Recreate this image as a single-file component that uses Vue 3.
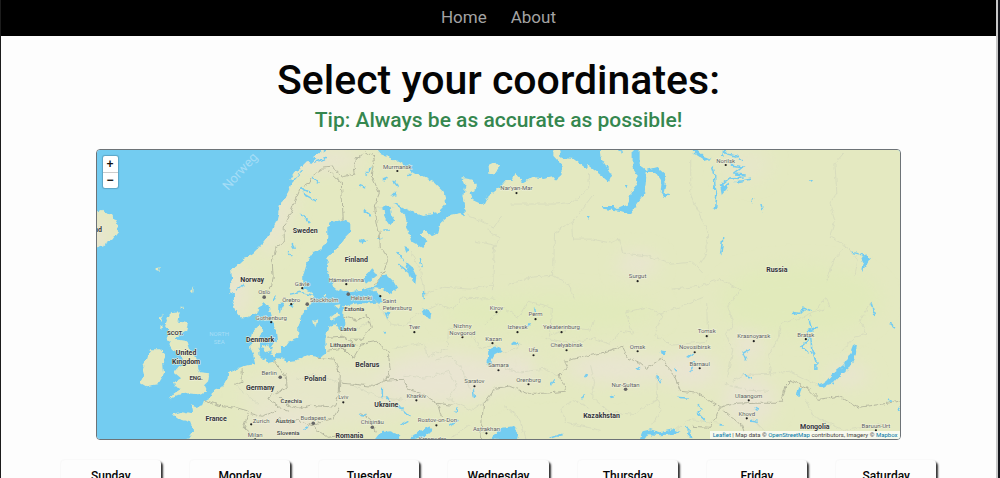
<script setup>
const links = ['Home', 'About']
const days = ['Sunday', 'Monday', 'Tuesday', 'Wednesday', 'Thursday', 'Friday', 'Saturday']

const mainland =
  'M185 442L193 430 190 422 177 418 173 414 183 411 192 413 191 405 196 407 203 405 205 400 212 396 213 390 222 387 227 380 228 373 237 369 242 367 248 365 255 364 253 355 250 348 250 340 252 332 260 324 263 330 259 337 260 345 258 353 263 358 267 362 275 360 282 357 287 362 295 361 307 355 320 357 326 353 325 340 328 327 335 324 340 331 345 329 345 320 342 313 343 306 357 303 370 303 382 302 380 295 373 289 357 290 345 292 333 287 328 272 327 258 337 248 345 237 350 232 350 223 343 220 330 222 327 228 327 238 323 248 313 253 307 262 303 275 303 288 313 293 313 297 310 305 302 313 298 327 298 337 290 340 285 347 278 346 277 333 273 323 270 313 268 305 263 303 257 312 248 317 240 317 235 310 232 300 235 294 230 292 232 278 231 270 242 260 253 253 263 243 272 232 277 218 280 205 288 192 291 184 300 174 310 164 320 155 330 146H373L380 154 390 158 400 163 413 172 433 182 443 192 446 203 437 213 423 216 407 210 393 202 405 215 407 228 412 242 423 248 427 240 420 235 423 230 432 236 438 233 440 223 450 215 460 213 463 217 465 208 463 195 465 185 462 178 473 180 477 188 470 192 472 200 483 205 487 197 500 187 506 180 512 180 515 173 520 178 522 183 533 177 543 179 552 177 555 181 562 175 562 165 553 155 550 146H558L560 158 573 159 585 168 587 165 600 175 608 182 611 175 605 165 600 158 599 146H906V445H185Z'

const islands = [
  'M170 313L180 312 176 321 188 323 186 330 179 335 175 339 187 341 190 350 196 357 198 367 200 373 209 374 208 381 204 385 207 391 198 394 187 393 177 395 169 399 174 393 182 388 175 386 174 382 181 378 174 372 178 367 183 365 182 355 175 353 170 345 166 338 168 330 165 326Z',
  'M150 349L160 349 166 355 163 361 164 374 158 384 146 386 139 382 144 375 142 367 147 359Z',
  'M94 212L102 210 106 213 112 215 117 224 118 232 112 240 103 246 94 249Z',
  'M488 165L494 162 499 167 495 173 489 174Z',
  'M261 346L268 344 271 350 266 352ZM272 344L280 341 281 350 275 356 270 354Z',
  'M155 269L160 268 158 271ZM191 291L194 286 193 293ZM181 308L183 306 184 309Z',
  'M160 317L164 315 160 322ZM159 326L163 325 162 329Z',
  'M329 318L337 312 340 315 333 320ZM334 305L340 304 339 309Z',
  'M289 180L294 172 302 168 297 177ZM300 168L307 161 311 165 304 172ZM313 157L323 150 327 154 317 161Z',
  'M322 295L327 294 325 297ZM313 321L317 319 315 327Z',
]

const waters = [
  'M632 146H639L639 165 645 170 656 167 664 174 665 184 663 193 669 194 664 198 660 192 661 181 655 172 646 172 645 184 644 193 636 204 630 214 620 211 604 209 602 206 613 206 617 209 626 205 630 194 636 184 637 176 632 168Z',
  'M690 147L697 150 703 156 711 159 704 161 695 155Z',
  'M379 277L386 274 393 281 397 288 389 294 383 289 375 288Z',
  'M405 261L411 266 416 276 415 284 409 277Z',
  'M383 206L389 207 391 215 395 222 390 225 384 216Z',
  'M852 346L856 344 855 354 849 367 838 376 832 383 820 387 818 384 826 381 833 373 843 365 849 354Z',
  'M373 441L380 432 389 431 400 435 397 441Z',
  'M407 440L418 431 430 426 432 430 423 437Z',
  'M490 439L499 428 512 426 518 433 516 441Z',
  'M639 440L642 431 650 429 659 432 672 429 680 432 672 434 660 435 648 434 643 441Z',
  'M688 430L692 438 687 437Z',
  'M798 386L801 387 799 395 796 396Z',
  'M719 184L723 187 729 183 726 189 721 195Z',
  'M422 308L431 312 430 319 424 316Z',
  'M384 312L389 313 387 319ZM382 330L385 331 384 334Z',
  'M488 349L497 347 502 350 494 354 490 361 492 368 487 364Z',
  'M512 341L520 343 512 345Z',
  'M660 351L666 352 662 356ZM609 396L614 395 611 399Z',
  'M860 257L866 254 870 258 866 264 861 271 863 263Z',
  'M278 304L284 303 283 308 278 312ZM288 306L295 301 292 309Z',
  'M365 173L372 166 370 170 365 175Z',
  'M382 178L387 176 385 181ZM390 197L397 190 396 195Z',
  'M359 239L367 240 361 243ZM407 212L412 216 409 218Z',
  'M624 186L628 186 626 189ZM586 216L589 216 588 220Z',
  'M808 180L812 180 811 183Z',
  'M404 247L409 249 406 253ZM398 254L402 255 400 257Z',
  'M363 279L372 268 377 275 366 284Z',
]

const streams = [
  'M290 294L300 292 312 295 322 293 333 296M348 292L360 291 371 288 380 286',
  'M711 165L714 174 714 184 716 194 715 208 713 209',
  'M722 157L723 150 727 154 735 156 741 161M730 165L742 167 733 174 745 175M735 182L751 179',
  'M720 185L729 178 742 177M753 198L751 202M760 203L762 211M722 238L720 254',
  'M791 313L797 314 803 308 812 311M808 319L811 330 805 331 816 327',
  'M804 335L810 338 811 350 815 360 815 370M808 339L801 346 808 353',
  'M749 349L742 353 745 360M744 374L751 378M697 405L702 409 697 413 704 420',
  'M870 303L874 316M851 252L859 254 867 258M889 323L894 327',
  'M302 193L316 201M300 213L310 223M292 243L294 249M288 252L292 257',
  'M312 176L318 183M358 185L365 188M363 209L371 216M393 181L397 186M407 177L411 173',
  'M382 230L389 230M377 239L383 238M397 251L403 260M398 264L408 272M420 258L422 268M423 291L424 299',
  'M327 158L315 162M300 188L310 193M275 296L273 301M236 290L244 285',
  'M386 397L393 406 400 407 410 417M400 425L407 421M382 388L382 398M303 429L308 426M359 414L365 415',
  'M473 389L474 398M448 425L458 420M455 412L457 408M525 328L530 323M534 308L535 312',
  'M584 377L586 374M581 399L584 394M657 376L660 382M684 426L690 431M550 385L554 379M550 438L562 434M636 367L639 370',
  'M686 358L693 353M694 361L690 372M674 368L676 371M896 411L900 407M886 400L892 401',
  'M754 408L758 410M750 420L757 421M719 424L722 425M618 150L623 153M677 397L688 398',
]

const borders = [
  'M263 293L271 287 273 277 272 262 276 247 284 242 284 227 289 216 294 202 300 188 308 184 315 173 323 168 332 167 342 177 355 174 353 162 365 152 374 157',
  'M328 170L341 183 342 200 343 221M371 152L374 160 371 175 379 193 374 206 376 218 379 235 380 247 388 258 384 270 374 285',
  'M274 360L285 376 286 388 275 393 286 404 297 408 310 405 335 407 339 391 340 375 334 359 317 357M327 350L343 348 353 358 361 344 377 341 388 353 390 370 386 380 372 386 354 384 342 383',
  'M343 316L357 320 367 315 371 327 362 339 350 339M328 337L342 336 356 345M382 380L403 379 408 389 423 394 437 403 441 417M339 407L333 418 311 425 298 420 286 423 278 418M311 425L327 437 341 435M360 412L370 419 375 432M278 390L267 398 281 408 289 411M277 410L261 416 250 413M205 400L219 405 235 407 249 411 243 427 251 434M234 384L242 381 242 369',
  'M437 403L452 405M480 440L483 404 495 388 509 386 527 393 544 393 565 391 563 381 557 376 567 367 564 361 603 352 622 346 627 358 639 362 646 368 661 358 673 374 680 391 697 393 719 407 736 403 755 402 781 402 785 386 791 380 808 389 818 399 838 396 858 407 880 404 903 400M719 408L710 427 691 426M722 410L741 425 744 433',
]

const regions = [
  'M376 208L394 207M410 252L420 270 425 294 442 287 470 289 491 285M466 215L482 221 493 228 500 217M474 241L494 245 492 289M488 230L499 238 492 252M510 204L555 204 573 202 588 188 589 174M553 275L554 233 571 222 583 207 593 194M572 222L573 239 592 239 610 243 619 239 623 253 648 256 670 264 692 262 701 272M508 284L532 277 552 275 568 284 574 299M671 289L700 286 719 279 741 290',
  'M690 160L690 196 701 219 707 231 706 252 700 263M843 153L834 163 836 193 829 203 834 220 829 237 846 246 833 260 826 281M846 246L857 260 854 276M740 289L727 306 733 325 725 334 732 349 727 377M770 377L768 354 778 338 781 323 802 317 825 308M870 302L859 321 866 334 854 337 840 352M760 374L789 371 809 381 820 386M731 380L745 374 768 374M815 310L824 297 830 308M724 384L748 390 768 391',
  'M374 299L390 324 405 326 413 316 438 304 453 309 460 298 495 299M392 348L423 343 427 357 447 348 448 328 469 330 479 348 493 344 506 353 521 344M435 360L450 356 461 368 469 388M404 375L425 378 449 371 456 386 448 399 471 410 490 398M484 325L503 307 518 318 528 301 551 307 549 336 570 327 590 330 593 319M545 338L570 343 593 338 609 344 620 331 632 333 625 312 646 307 662 315 654 334 671 345 707 341 706 303M590 365L594 382 591 396 607 411 631 414 657 399 656 374M657 315L703 297M500 366L517 372 544 369 559 377',
  'M600 430L566 422 560 408 576 400 588 408M652 424L661 409 656 398M674 431L688 419 719 423M526 439L518 417 503 405M452 437L468 425 486 433M354 386L379 397 404 400M353 330L373 320M296 379L314 374 338 382M236 386L250 397 259 405M750 416L764 431 793 437M805 399L812 416 844 430 881 424',
]

const cities = [
  ['Murmansk', 397, 169, 397, 171], ["Nar'yan-Mar", 516, 190, 516, 193], ['Norilsk', 725, 163, 725, 165],
  ['Surgut', 637, 278, 637, 281], ['Gävle', 302, 286, 302, 288], ['Hämeenlinna', 346, 282, 346, 284],
  ['Örebro', 291, 302, 291, 304], ['Gothenburg', 271, 320, 271, 322], ['Tver', 414, 329, 414, 332],
  ['Kirov', 496, 310, 496, 312], ['Perm', 535, 316, 535, 319], ['Izhevsk', 517, 329, 517, 332],
  ['Yekaterinburg', 561, 329, 561, 332], ['Kazan', 493, 341, 492, 343], ['Ufa', 533, 352, 533, 355],
  ['Chelyabinsk', 566, 347, 566, 350], ['Samara', 498, 367, 498, 370], ['Orenburg', 528, 382, 528, 384],
  ['Omsk', 637, 349, 637, 351], ['Novosibirsk', 694, 349, 694, 352], ['Tomsk', 706, 333, 706, 336],
  ['Barnaul', 699, 366, 699, 368], ['Krasnoyarsk', 753, 338, 753, 341], ['Bratsk', 805, 337, 805, 339],
  ['Saratov', 474, 383, 474, 386], ['Kharkiv', 416, 398, 416, 400], ['Lviv', 343, 399, 343, 402],
  ['Rostov-on-Don', 437, 422, 436, 425], ['Astrakhan', 486, 431, 486, 433], ['Zurich', 261, 423, 251, 424],
  ['Milan', 255, 437, 255, 439], ['Ulaangom', 748, 398, 748, 400], ['Khovd', 746, 416, 746, 418],
  ['Baruun-Urt', 875, 428, 875, 430],
]
const capitals = [
  ['Oslo', 264, 294, 264, 297], ['Berlin', 269, 375, 280, 377], ['Budapest', 313, 420, 313, 423],
  ['Chişinău', 372, 424, 372, 427], ['Nur-Sultan', 625, 387, 625, 389], ['Stockholm', 324, 302, 307, 304],
  ['Helsinki', 361, 300, 348, 294],
]
const countries = [
  ['Sweden', 305, 233], ['Norway', 252, 282], ['Finland', 356, 262], ['Denmark', 260, 342],
  ['Germany', 260, 390], ['Poland', 315, 381], ['Belarus', 367, 367], ['Ukraine', 386, 407],
  ['France', 216, 421], ['Romania', 349, 438], ['Russia', 776, 272], ['Kazakhstan', 601, 418],
  ['Mongolia', 814, 429], ['United', 186, 355], ['Kingdom', 186, 364],
]
const smallCountries = [
  ['Estonia', 354, 311], ['Latvia', 348, 331], ['Lithuania', 342, 347], ['Czechia', 291, 403],
  ['Austria', 285, 423], ['Slovenia', 288, 435],
]
</script>

<template>
  <div class="page">
    <header class="topbar">
      <nav class="nav" aria-label="Main">
        <a v-for="link in links" :key="link" href="#">{{ link }}</a>
      </nav>
    </header>

    <main>
      <h1>Select your coordinates:</h1>
      <p class="tip">Tip: Always be as accurate as possible!</p>

      <section class="map" aria-label="Map">
        <svg class="tiles" viewBox="97 150 803 289" preserveAspectRatio="xMidYMid slice">
          <defs>
            <filter id="coast" x="0" y="0" width="1" height="1">
              <feTurbulence type="fractalNoise" baseFrequency="0.2" numOctaves="2" seed="4" result="n" />
              <feDisplacementMap in="SourceGraphic" in2="n" scale="5" xChannelSelector="R" yChannelSelector="G" />
            </filter>
            <filter id="soft" x="-0.5" y="-0.5" width="2" height="2"><feGaussianBlur stdDeviation="9" /></filter>
            <clipPath id="ground">
              <path :d="mainland" />
              <path v-for="d in islands" :key="d" :d="d" />
            </clipPath>
          </defs>
          <rect x="90" y="140" width="820" height="310" fill="#73ccf1" />
          <g filter="url(#coast)">
            <rect x="90" y="140" width="820" height="310" fill="none" />
            <g clip-path="url(#ground)">
              <rect x="90" y="140" width="820" height="310" fill="#e4e9c1" />
              <g filter="url(#soft)" fill="#e9e5d1">
                <ellipse cx="236" cy="292" rx="12" ry="24" />
                <ellipse cx="278" cy="222" rx="9" ry="35" transform="rotate(22 278 222)" />
                <ellipse cx="325" cy="160" rx="38" ry="10" />
                <ellipse cx="96" cy="237" rx="12" ry="20" />
                <ellipse cx="440" cy="378" rx="60" ry="26" />
                <ellipse cx="515" cy="370" rx="35" ry="16" />
                <ellipse cx="620" cy="368" rx="55" ry="14" />
                <ellipse cx="690" cy="370" rx="28" ry="18" />
                <ellipse cx="637" cy="264" rx="20" ry="11" />
                <ellipse cx="748" cy="400" rx="26" ry="26" />
                <ellipse cx="748" cy="345" rx="14" ry="18" />
                <ellipse cx="848" cy="375" rx="20" ry="10" />
                <ellipse cx="285" cy="425" rx="36" ry="14" />
                <ellipse cx="330" cy="395" rx="90" ry="30" opacity=".5" />
                <ellipse cx="745" cy="165" rx="25" ry="16" opacity=".5" />
              </g>
              <g filter="url(#soft)" fill="#e1eabb">
                <ellipse cx="550" cy="312" rx="110" ry="18" />
                <ellipse cx="800" cy="300" rx="80" ry="35" />
                <ellipse cx="542" cy="365" rx="6" ry="20" />
              </g>
            </g>
            <g fill="none" stroke="#cfd2ba" stroke-width="0.7" opacity="0.8">
              <path v-for="d in regions" :key="d" :d="d" />
            </g>
            <g fill="none" stroke="#b0b29b" stroke-width="0.9">
              <path v-for="d in borders" :key="d" :d="d" />
            </g>
            <g fill="#73ccf1">
              <path v-for="d in waters" :key="d" :d="d" />
            </g>
            <g fill="none" stroke="#73ccf1" stroke-width="1.5">
              <path v-for="d in streams" :key="d" :d="d" />
            </g>
          </g>

          <g class="sea">
            <text class="sea-big" transform="translate(228 191) rotate(-48)">Norweg</text>
            <text x="219" y="336">NORTH</text>
            <text x="219" y="344">SEA</text>
          </g>
          <g class="label city">
            <template v-for="c in cities" :key="c[0]">
              <circle :cx="c[3]" :cy="c[4]" r="1.1" />
              <text :x="c[1]" :y="c[2]">{{ c[0] }}</text>
            </template>
            <circle cx="380" cy="296" r="1.1" />
            <text x="389" y="303">Saint</text>
            <text x="397" y="310">Petersburg</text>
            <circle cx="462" cy="337" r="1.1" />
            <text x="462" y="328">Nizhny</text>
            <text x="462" y="335">Novgorod</text>
            <text x="432" y="441">Krasnodar</text>
          </g>
          <g class="label city capital">
            <template v-for="c in capitals" :key="c[0]">
              <circle :cx="c[3]" :cy="c[4]" r="1.8" />
              <text :x="c[1]" :y="c[2]">{{ c[0] }}</text>
            </template>
          </g>
          <g class="label small">
            <text v-for="c in smallCountries" :key="c[0]" :x="c[1]" :y="c[2]">{{ c[0] }}</text>
            <text class="nation" x="175" y="335">SCOT.</text>
            <text class="nation" x="196" y="380">ENG.</text>
          </g>
          <g class="label country">
            <text v-for="c in countries" :key="c[0]" :x="c[1]" :y="c[2]">{{ c[0] }}</text>
            <text x="98" y="232">nd</text>
          </g>
        </svg>
        <div class="zoom">
          <button type="button" aria-label="Zoom in">+</button>
          <button type="button" aria-label="Zoom out">−</button>
        </div>
        <div class="credit">
          <a href="#">Leaflet</a> | Map data © <a href="#">OpenStreetMap</a> contributors, Imagery © <a href="#">Mapbox</a>
        </div>
      </section>

      <section class="days" aria-label="Forecast">
        <article v-for="day in days" :key="day" class="day">
          <h2>{{ day }}</h2>
        </article>
      </section>
    </main>
  </div>
</template>

<style>
html,
body {
  background: #fdfdfd;
}
</style>

<style scoped>
.page {
  box-sizing: border-box;
  height: 100vh;
  padding-right: 2px;
  overflow: hidden;
  border-left: 1px solid #1c1c1c;
  border-right: 2px solid #15161c;
  background: #fdfdfd;
  box-shadow: inset -2px 0 #c8c8c8;
  font-family: Roboto, "Liberation Sans", sans-serif;
  color: #050505;
}
.topbar {
  background: #000;
}
.nav {
  display: flex;
  justify-content: center;
  gap: 24px;
  padding: 5px 0 7px;
}
.nav a {
  color: #a3a3a3;
  font-size: 17px;
  line-height: 24px;
  text-decoration: none;
}
main {
  display: flex;
  flex-direction: column;
  align-items: center;
}
h1 {
  margin: 18px 0 0;
  font-size: 41px;
  font-weight: 500;
  line-height: 52px;
}
.tip {
  margin: 0;
  padding: 1px 0 16px;
  color: #35874f;
  font-size: 21px;
  font-weight: 500;
  line-height: 26px;
}
.map {
  position: relative;
  box-sizing: border-box;
  width: 81%;
  overflow: hidden;
  border: 1px solid #6d7377;
  border-radius: 4px;
  aspect-ratio: 805 / 291;
}
.tiles {
  display: block;
  width: 100%;
  height: 100%;
}
.label {
  fill: #3c3d40;
  stroke: #f1f3df;
  stroke-width: 1px;
  paint-order: stroke;
  text-anchor: middle;
  font-family: Roboto, "Noto Sans", sans-serif;
}
.label circle {
  fill: #222;
  stroke: none;
}
.city {
  fill: #5c5d60;
  font-size: 6px;
}
.capital circle {
  fill: #666;
}
.small {
  font-size: 6px;
  font-weight: 500;
}
.nation {
  font-weight: 700;
}
.country {
  fill: #333439;
  font-size: 7px;
  font-weight: 700;
}
.sea {
  fill: #a5ddf6;
  font-family: Roboto, "Noto Sans", sans-serif;
  font-size: 6px;
  text-anchor: middle;
}
.sea .sea-big {
  font-size: 13px;
  text-anchor: start;
}
.zoom {
  position: absolute;
  top: 6px;
  left: 6px;
  display: flex;
  flex-direction: column;
  border-radius: 2px;
  background: #fff;
  box-shadow: 0 0 1px 1px #5ca5c5;
}
.zoom button {
  width: 15px;
  height: 16px;
  padding: 0;
  border: 0;
  background: none;
  color: #111;
  font: bold 12px/15px "Liberation Sans", sans-serif;
}
.zoom button + button {
  border-top: 1px solid #ccc;
}
.credit {
  position: absolute;
  right: 0;
  bottom: 0;
  padding: 0 3px;
  background: rgba(255, 255, 255, 0.7);
  color: #444;
  font: 6px/8px Roboto, "Liberation Sans", sans-serif;
  white-space: nowrap;
}
.credit a {
  color: #0078a8;
  text-decoration: none;
}
.days {
  display: grid;
  grid-template-columns: repeat(7, 1fr);
  gap: 29px;
  width: 88%;
  margin-top: 20px;
}
.day {
  padding: 7px 0 96px;
  border-radius: 4px;
  background: #fdfdfd;
  box-shadow: 2px 2px 2px #333, 0 0 2px #eee;
}
.day h2 {
  margin: 0;
  font-size: 12px;
  font-weight: 500;
  line-height: 18px;
  text-align: center;
}
</style>
